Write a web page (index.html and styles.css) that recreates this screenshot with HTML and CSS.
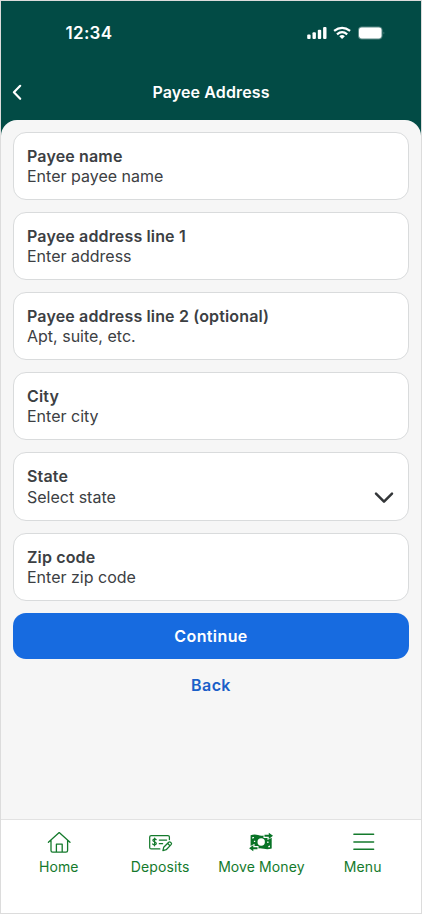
FILE: index.html
```html
<!DOCTYPE html>
<html lang="en">
<head>
<meta charset="utf-8">
<title>Payee Address</title>
<link rel="stylesheet" href="styles.css">
</head>
<body>
<div class="phone">
  <header class="header">
    <div class="status">
      <span class="time">12:34</span>
      <svg class="indicators" width="80" height="16" viewBox="0 0 80 16" fill="#fff">
        <rect x="1.2" y="9.5" width="3.4" height="4.5" rx="1"/>
        <rect x="6.5" y="7.3" width="3.4" height="6.7" rx="1"/>
        <rect x="11.8" y="4.8" width="3.4" height="9.2" rx="1"/>
        <rect x="17.1" y="2" width="3.4" height="12" rx="1"/>
        <g fill="none" stroke="#fff" stroke-width="2.3">
          <path d="M28.1 5.9Q36.1 -.2 44.1 5.9"/>
          <path d="M31 9.3Q36.1 5 41.2 9.3"/>
        </g>
        <path d="M33.3 11.2Q36.1 9 38.9 11.2L36.1 14Z"/>
        <rect x="52" y="1.5" width="24.5" height="13" rx="4" opacity=".35"/>
        <rect x="53" y="2.6" width="22.5" height="10.8" rx="2.8"/>
        <path d="M77.6 6.5Q79.2 8 77.6 9.6Z" opacity=".4"/>
      </svg>
    </div>
    <div class="titlebar">
      <svg class="back-icon" width="12" height="18" viewBox="0 0 12 18" fill="none" stroke="#fff" stroke-width="2.2" stroke-linecap="round" stroke-linejoin="round"><path d="M9.2 2.8L2.9 9.3L9.2 15.8"/></svg>
      <h1 class="title">Payee Address</h1>
    </div>
  </header>
  <main class="content">
    <div class="field"><span class="label">Payee name</span><span class="hint">Enter payee name</span></div>
    <div class="field"><span class="label">Payee address line 1</span><span class="hint">Enter address</span></div>
    <div class="field"><span class="label">Payee address line 2 (optional)</span><span class="hint">Apt, suite, etc.</span></div>
    <div class="field"><span class="label">City</span><span class="hint">Enter city</span></div>
    <div class="field select">
      <div class="select-text"><span class="label">State</span><span class="hint">Select state</span></div>
      <svg class="chevron" width="20" height="14" viewBox="0 0 20 14" fill="none" stroke="#333638" stroke-width="2.5" stroke-linecap="round" stroke-linejoin="round"><path d="M2 2.7L10 10.7L18 2.7"/></svg>
    </div>
    <div class="field"><span class="label">Zip code</span><span class="hint">Enter zip code</span></div>
    <button class="continue">Continue</button>
    <a class="back">Back</a>
  </main>
  <nav class="tabs">
    <div class="tab">
      <svg width="26" height="24" viewBox="0 0 26 24" fill="none" stroke="#147a2c" stroke-width="1.3" stroke-linecap="round" stroke-linejoin="round"><path d="M2.4 12.3L13.2 2.6L24 12.3M5 10.2V20.5Q5 22.1 6.6 22.1H20Q21.6 22.1 21.6 20.5V10.2M10.4 22V14.2H16.2V22"/></svg>
      <span class="tab-name">Home</span>
    </div>
    <div class="tab">
      <svg width="26" height="24" viewBox="0 0 26 24" fill="none" stroke="#147a2c" stroke-width="1.25" stroke-linecap="round" stroke-linejoin="round"><path d="M12.8 18.9H4.2Q2.7 18.9 2.7 17.4V7Q2.7 5.5 4.2 5.5H20.9Q22.4 5.5 22.4 7V9.5M12.3 10H19.6M12.3 13.7H15.6M9.2 9.6C8 8.5 5.8 9 5.9 10.4C6 12 9.3 11.6 9.3 13.4C9.3 15 6.8 15.2 5.7 14M7.6 8V15.8M15.9 20.6L16.7 17.3L21.7 12.2Q22.6 11.4 23.5 12.2L24.2 12.9Q25 13.7 24.1 14.6L19.2 19.7ZM20.6 13.4L23 15.7"/></svg>
      <span class="tab-name">Deposits</span>
    </div>
    <div class="tab">
      <svg width="26" height="24" viewBox="0 0 26 24" fill="#087326"><path d="M2.6 5.2Q6.5 4 10 5Q13 6 15.5 5.400V8H19.500V10L23.700 7.800V18.600Q19.500 19.800 15.800 18.800Q12.500 18 10.500 18.400V16H6.500V13.800L2.600 16Z"/><g fill="#fff"><circle cx="13.200" cy="12" r="3.700"/><path d="M4.300 6.900V8.700Q6 8.700 6.200 6.900ZM22 15.500Q20.100 15.500 19.900 17.300H22ZM19.200 11.600H20.500V12.900H19.200ZM5.900 10.800H7.200V12.100H5.900Z"/></g><path d="M16.5 4.800H20.8V2.700L25 5.800L20.8 8.900V6.800H16.500ZM9.500 17.200H5.300V15.100L1.100 18.200L5.300 21.300V19.200H9.500Z"/></svg>
      <span class="tab-name">Move Money</span>
    </div>
    <div class="tab">
      <svg class="menu-icon" width="26" height="24" viewBox="0 0 26 24" fill="none" stroke="#147a2c" stroke-width="1.5" stroke-linecap="round"><path d="M3.9 4.3H23.6M3.9 11.9H23.6M3.9 19.3H23.6"/></svg>
      <span class="tab-name">Menu</span>
    </div>
  </nav>
</div>
</body>
</html>
```

FILE: styles.css
```css
* { box-sizing: border-box; }

body {
  margin: 0;
  background: #fff;
  font-family: Inter, "Liberation Sans", sans-serif;
}

.phone {
  width: 422px;
  height: 914px;
  display: flex;
  flex-direction: column;
  border: 1px solid #dcdcdc;
  background: #024b45;
}

.header {
  height: 119px;
  color: #fff;
}

.status {
  height: 64px;
  display: flex;
  align-items: center;
  justify-content: space-between;
  padding: 0 35px 0 64.5px;
}

.time {
  font-size: 17px;
  font-weight: 600;
  letter-spacing: 0.3px;
}

.titlebar {
  display: flex;
  align-items: center;
  height: 54px;
  padding-left: 9.5px;
}

.title {
  flex: 1;
  margin: 0 21.5px 0 0;
  font-size: 16px;
  font-weight: 560;
  line-height: 20px;
  letter-spacing: 0.12px;
  text-align: center;
}

.content {
  flex: 1;
  display: flex;
  flex-direction: column;
  gap: 12px;
  padding: 12px 12px 0;
  border-radius: 16px 16px 0 0;
  background: #f6f6f6;
}

.field {
  display: flex;
  flex-direction: column;
  height: 68px;
  padding: 13px 14px 13px 13px;
  border: 1px solid #d9dbdc;
  border-radius: 13px;
  background: #fff;
  color: #3c4043;
}

.select {
  flex-direction: row;
  justify-content: space-between;
  height: 69px;
}

.select-text {
  display: flex;
  flex-direction: column;
}

.chevron { margin-top: 25px; }

.label,
.hint {
  font-size: 16px;
  line-height: 20px;
}

.label {
  font-weight: 600;
  letter-spacing: 0.15px;
}

.select .hint { line-height: 22px; }

.continue {
  height: 46px;
  border: 0;
  border-radius: 13px;
  background: #176be0;
  color: #fff;
  font: 600 16px/20px Inter, sans-serif;
  letter-spacing: 0.4px;
}

.back {
  align-self: center;
  margin-top: 4px;
  color: #1a5fc8;
  font-size: 16px;
  font-weight: 600;
  line-height: 20px;
  letter-spacing: 0.4px;
}

.tabs {
  display: grid;
  grid-template-columns: repeat(4, 101.3px);
  justify-content: center;
  height: 94px;
  padding: 10px 0.5px 0 0;
  border-top: 1px solid #e2e2e2;
  background: #fff;
}

.tab {
  display: flex;
  flex-direction: column;
  align-items: center;
  gap: 3px;
  color: #147a2c;
}

.tab-name {
  font-size: 14px;
  line-height: 20px;
  letter-spacing: 0.1px;
  white-space: nowrap;
}
```
